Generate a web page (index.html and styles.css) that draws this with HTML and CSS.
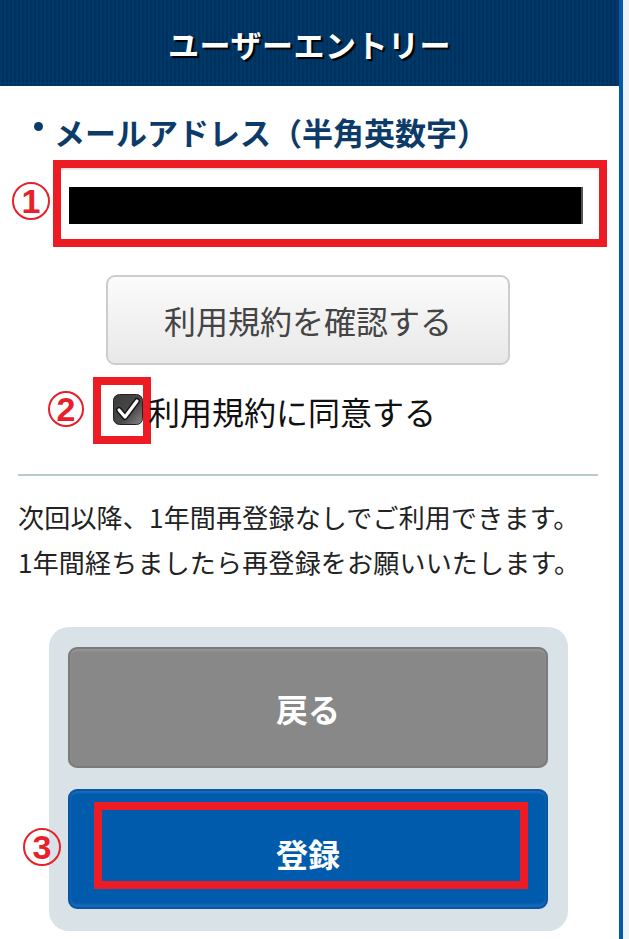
FILE: index.html
```html
<!DOCTYPE html>
<html lang="ja">
<head>
    <meta charset="UTF-8">
    <meta name="viewport" content="width=device-width, initial-scale=1.0">
    <title>ユーザーエントリー</title>
    <link rel="stylesheet" href="styles.css">
</head>
<body>
    <div class="page">
        <div class="header">
            <h1>ユーザーエントリー</h1>
        </div>

        <div class="content">
            <h2 class="label">メールアドレス（半角英数字）</h2>

            <div class="field-row">
                <span class="mark mark-1">1</span>
                <div class="mark-box field">
                    <div class="input">
                        <span class="redacted"></span>
                    </div>
                </div>
            </div>

            <button class="btn-terms">利用規約を確認する</button>

            <div class="agree-row">
                <span class="mark mark-2">2</span>
                <span class="mark-box check-box">
                    <svg class="check" width="30" height="31" viewBox="0 0 30 31">
                        <defs>
                            <linearGradient id="cb" x1="0" y1="0" x2="1" y2="1">
                                <stop offset="0" stop-color="#3a3a3a"/>
                                <stop offset="0.6" stop-color="#4a4a4a"/>
                                <stop offset="1" stop-color="#8a8a8a"/>
                            </linearGradient>
                        </defs>
                        <rect x="0.5" y="0.5" width="29" height="30" rx="6" fill="url(#cb)" stroke="#222"/>
                        <path d="M6 16 L12 23 L24 7" fill="none" stroke="#111" stroke-width="6" stroke-linecap="round" stroke-linejoin="round"/>
                        <path d="M6 16 L12 23 L24 7" fill="none" stroke="#fff" stroke-width="3.2" stroke-linecap="round" stroke-linejoin="round"/>
                    </svg>
                </span>
                <span class="agree-text">利用規約に同意する</span>
            </div>

            <hr class="divider">

            <p class="note">次回以降、1年間再登録なしでご利用できます。<br>1年間経ちましたら再登録をお願いいたします。</p>

            <div class="actions">
                <button class="btn btn-back">戻る</button>
                <div class="submit-row">
                    <span class="mark mark-3">3</span>
                    <button class="btn btn-submit">
                        <span class="mark-frame"></span>
                        登録
                    </button>
                </div>
            </div>
        </div>
    </div>
</body>
</html>
```

FILE: styles.css
```css
* {
    box-sizing: border-box;
}
body {
    margin: 0;
    font-family: "Noto Sans CJK JP", "Noto Sans", sans-serif;
    background: linear-gradient(90deg, #cfdde6, #eef3f6);
}
.page {
    width: 623px;
    min-height: 939px;
    background: #fff;
    border-right: 4px solid #005bac;
    overflow: hidden;
}
.header {
    height: 86px;
    display: flex;
    align-items: center;
    justify-content: center;
    background: repeating-linear-gradient(90deg, #00386a 0 2px, #003260 2px 4px);
}
.header h1 {
    margin: 0;
    color: #fff;
    font-size: 31px;
    font-weight: bold;
    letter-spacing: 0.5px;
    text-shadow: 2px 2px 1px #000;
}
.content {
    padding: 0 21px 0 18px;
}
.label {
    display: flex;
    align-items: center;
    margin: 25px 0 0 16px;
    height: 40px;
    color: #0d3b69;
    font-size: 31px;
    font-weight: bold;
}
.label::before {
    content: "";
    width: 9px;
    height: 9px;
    margin: -10px 11px 0 0;
    border-radius: 50%;
    background: #0d3b69;
}

/* red annotation marks */
.mark {
    position: absolute;
    z-index: 2;
    width: 38px;
    height: 38px;
    display: flex;
    align-items: center;
    justify-content: center;
    border: 2px solid #e8202a;
    border-radius: 50%;
    color: #e8202a;
    font-family: "Liberation Sans", Arial, sans-serif;
    font-size: 34px;
    font-weight: bold;
    line-height: 1;
}
.mark-box {
    border: 8px solid #ed1c24;
}

.field-row {
    position: relative;
    margin-top: 9px;
}
.mark-1 {
    left: -6px;
    top: 22px;
}
.field {
    width: 554px;
    margin-left: 35px;
}
.input {
    height: 71px;
    padding: 19px 0 0 8px;
    background: #fff;
    box-shadow: inset 0 3px 3px -2px #d0d0d0;
}
.redacted {
    display: block;
    width: 514px;
    height: 37px;
    background: #000;
    border-right: 2px solid #555;
}

.btn-terms {
    display: block;
    width: 404px;
    height: 90px;
    margin: 28px auto 0;
    padding: 0;
    border: 2px solid #cdcdcd;
    border-radius: 9px;
    background: linear-gradient(#fbfbfb, #e8e8e8);
    color: #444;
    font-family: inherit;
    font-size: 32px;
}

.agree-row {
    position: relative;
    display: flex;
    align-items: center;
    margin: 12px 0 0 75px;
}
.mark-2 {
    left: -45px;
    top: 14px;
    width: 36px;
    height: 36px;
}
.check-box {
    display: flex;
    width: 58px;
    height: 67px;
    padding: 9px 0 0 12px;
}
.check {
    display: block;
}
.agree-text {
    margin-left: -3px;
    color: #111;
    font-size: 32px;
}

.divider {
    margin: 30px 0 0;
    border: 0;
    height: 2px;
    background: #b9c9d1;
}
.note {
    margin: 18px 0 0;
    color: #222;
    font-size: 26px;
    line-height: 45px;
    letter-spacing: 0.2px;
}

.actions {
    width: 519px;
    margin: 43px 0 0 31px;
    padding: 20px 20px 22px 19px;
    border-radius: 20px;
    background: #d8e2e7;
    display: flex;
    flex-direction: column;
    gap: 21px;
}
.btn {
    display: flex;
    align-items: center;
    justify-content: center;
    width: 100%;
    padding: 0;
    border-radius: 9px;
    color: #fff;
    font-family: inherit;
    font-size: 32px;
    font-weight: bold;
}
.btn-back {
    height: 121px;
    border: 2px solid #7a7a7a;
    background: #888;
    box-shadow: inset 0 2px 2px #959595;
}
.submit-row {
    position: relative;
}
.mark-3 {
    left: -45px;
    top: 39px;
}
.btn-submit {
    position: relative;
    height: 120px;
    padding-top: 8px;
    border: 2px solid #0a56a4;
    background: #005bac;
    box-shadow: inset 0 -3px 2px #1667b6, inset 0 2px 2px #1a6cbb;
}
.mark-frame {
    position: absolute;
    left: 24px;
    top: 11px;
    right: 18px;
    bottom: 18px;
    border: 8px solid #ed1c24;
}
```
